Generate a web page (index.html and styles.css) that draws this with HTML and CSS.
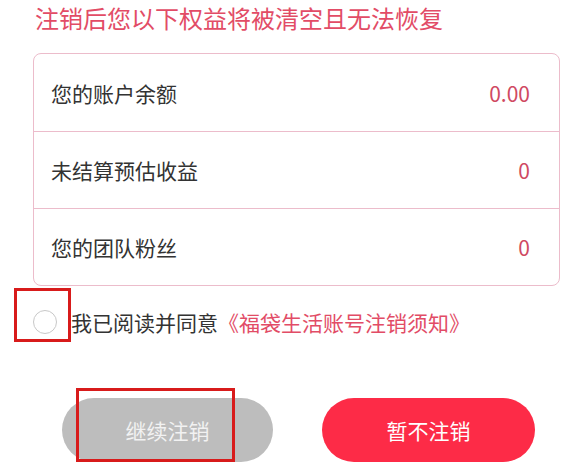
FILE: index.html
```html
<!DOCTYPE html>
<html lang="zh-CN">

<head>
    <meta charset="UTF-8">
    <meta name="viewport" content="width=device-width, initial-scale=1.0">
    <link rel="stylesheet" href="styles.css">
    <title>账号注销</title>
</head>

<body>
    <div class="page">
        <h1 class="title">注销后您以下权益将被清空且无法恢复</h1>

        <div class="card">
            <div class="row">
                <span class="label">您的账户余额</span>
                <span class="value">0.00</span>
            </div>
            <div class="row">
                <span class="label">未结算预估收益</span>
                <span class="value">0</span>
            </div>
            <div class="row">
                <span class="label">您的团队粉丝</span>
                <span class="value">0</span>
            </div>
        </div>

        <div class="agree">
            <span class="radio"></span>
            <span class="agree-text">我已阅读并同意<a class="link" href="#">《福袋生活账号注销须知》</a></span>
            <span class="mark mark-radio"></span>
        </div>

        <div class="actions">
            <button type="button" class="btn btn-gray">继续注销</button>
            <button type="button" class="btn btn-red">暂不注销</button>
            <span class="mark mark-btn"></span>
        </div>
    </div>
</body>

</html>
```

FILE: styles.css
```css
body {
    margin: 0;
    background-color: #fff;
    font-family: "Noto Sans CJK SC", "Noto Sans", sans-serif;
    color: #333;
}

.page {
    padding: 0 16px 0 33px;
}

.title {
    margin: 0 0 17px 2px;
    font-size: 24px;
    font-weight: normal;
    line-height: 36px;
    color: #e24c66;
}

.card {
    border: 1px solid #ecbccb;
    border-radius: 8px;
}

.row {
    display: flex;
    align-items: center;
    justify-content: space-between;
    box-sizing: border-box;
    height: 77px;
    padding: 0 29px 0 17px;
    font-size: 21px;
}

.row + .row {
    border-top: 1px solid #ecbccb;
}

.label {
    color: #333;
}

.value {
    color: #d04a62;
}

.agree {
    position: relative;
    display: flex;
    align-items: center;
    height: 40px;
    margin-top: 16px;
}

.radio {
    box-sizing: border-box;
    width: 24px;
    height: 24px;
    border: 1.5px solid #c8c8c8;
    border-radius: 50%;
}

.agree-text {
    margin-left: 14px;
    font-size: 21px;
    color: #333;
}

.link {
    color: #e24c66;
    text-decoration: none;
}

.actions {
    position: relative;
    display: flex;
    gap: 49px;
    margin: 56px 0 0 29px;
}

.btn {
    height: 64px;
    border: none;
    border-radius: 32px;
    font-family: inherit;
    font-size: 21px;
    color: #fff;
}

.btn-gray {
    width: 211px;
    background-color: #bdbdbd;
    color: #f2f2f2;
}

.btn-red {
    width: 213px;
    background-color: #fd2b47;
}

/* red annotation frames */
.mark {
    position: absolute;
    box-sizing: border-box;
    border: 3px solid #d81b1b;
}

.mark-radio {
    left: -19px;
    top: -14px;
    width: 57px;
    height: 54px;
}

.mark-btn {
    left: 14px;
    top: -10px;
    width: 159px;
    height: 74px;
}
```
